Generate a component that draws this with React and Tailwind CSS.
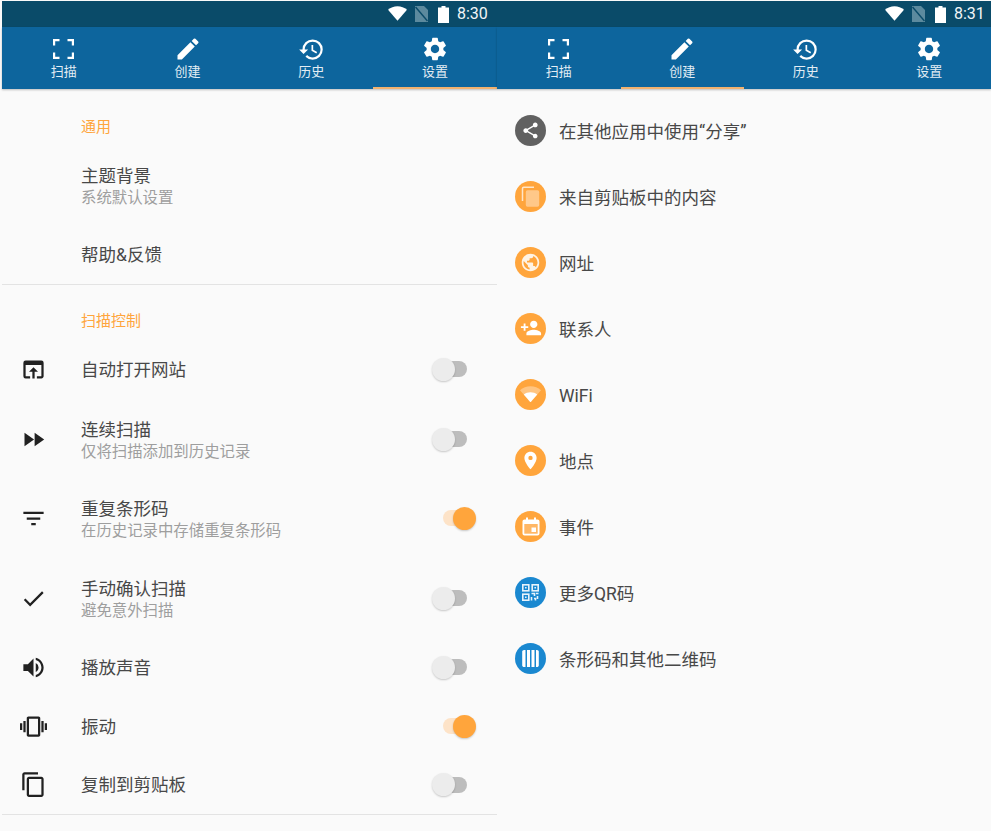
import React from 'react';
import {
    MdCreate, MdHistory, MdSettings, MdOpenInBrowser, MdFastForward, MdFilterList, MdCheck,
    MdVolumeUp, MdVibration, MdContentCopy, MdShare, MdPublic, MdPersonAdd, MdPlace,
} from 'react-icons/md';

const ScanIcon = () => (
    <svg width="21" height="20" viewBox="0 0 21 20" fill="none" stroke="white" strokeWidth="2.2">
        <path d="M1.100 6.500V1.100H6.500M14.500 1.100H19.900V6.500M1.100 13.500V18.900H6.500M14.500 18.900H19.900V13.500" />
    </svg>
);

const WifiFan = ({ size = 20, faded = false }) => (
    <svg width={size} height={size * 0.8} viewBox="0 0 20 16">
        <path d="M10 15.500L0 4C2.800 1.600 6.200 0.300 10 0.300S17.200 1.600 20 4Z" fill="white" opacity={faded ? 0.35 : 1} />
        {faded && <path d="M10 15.500L3.600 8.200C5.400 6.800 7.600 6 10 6S14.600 6.800 16.400 8.200Z" fill="white" />}
    </svg>
);

const CopyBadge = () => (
    <svg width="19" height="21" viewBox="0 0 19 21" fill="none">
        <rect x="5.500" y="5" width="12" height="15" rx="1" fill="#ffe6c9" opacity="0.55" stroke="#ffe6c9" strokeWidth="1.400" />
        <path d="M1.500 15V2.500C1.500 1.800 2 1.300 2.700 1.300H13" stroke="#ffe6c9" strokeWidth="1.500" />
    </svg>
);

const CalendarBadge = () => (
    <svg width="18" height="19" viewBox="0 0 18 19">
        <path d="M4 0.500H6V2.500H12V0.500H14V2.500H15.500C16.600 2.500 17.500 3.400 17.500 4.500V16.500C17.500 17.600 16.600 18.500 15.500 18.500H2.500C1.400 18.500 0.500 17.600 0.500 16.500V4.500C0.500 3.400 1.400 2.500 2.500 2.500H4Z" fill="white" />
        <rect x="2.300" y="7" width="13.400" height="9.700" fill="#ffb765" />
        <rect x="9.500" y="10.500" width="4.500" height="4.500" fill="white" />
    </svg>
);

const QrBadge = () => (
    <svg width="17" height="17" viewBox="0 0 17 17" fill="none" stroke="#e8f3fb" strokeWidth="1.600">
        <rect x="0.800" y="0.800" width="6" height="6" />
        <rect x="10.200" y="0.800" width="6" height="6" />
        <rect x="0.800" y="10.200" width="6" height="6" />
        <path d="M3 3.800H4.600M12.400 3.800H14M3 13.200H4.600M9.500 9.500H12.500V12M14 9.500H16.500M9.500 13V16.500M12 14.500H13.500V16.500M15.500 12V15" />
    </svg>
);

const BarcodeIcon = () => (
    <svg width="17" height="17" viewBox="0 0 17 17" fill="white">
        <path d="M2 0H3.500V17H2C1 17 0.200 16.200 0.200 15.200V1.800C0.200 0.800 1 0 2 0Z" />
        <rect x="5" width="3" height="17" />
        <rect x="9.500" width="3" height="17" />
        <path d="M14 0H15C16 0 16.800 0.800 16.800 1.800V15.200C16.800 16.200 16 17 15 17H14Z" />
    </svg>
);

const tabs = [
    { name: '扫描', icon: <ScanIcon /> },
    { name: '创建', icon: <MdCreate size={28} color="white" /> },
    { name: '历史', icon: <MdHistory size={27} color="white" /> },
    { name: '设置', icon: <MdSettings size={28} color="white" /> },
];

const TopBar = ({ time, active, statusPad }) => (
    <div>
        <div className={`h-[26px] bg-[#0a4b69] flex items-center justify-end ${statusPad}`}>
            <WifiFan size={19} />
            <svg className="ml-2" width="13" height="16" viewBox="0 0 13 16">
                <path d="M0 0H9L13 4V16H0Z" fill="#5c8a9e" />
                <path d="M0.500 1L12.500 15" stroke="#0a4b69" strokeWidth="1.500" />
            </svg>
            <svg className="ml-[10px]" width="11" height="17" viewBox="0 0 11 17">
                <path d="M3.500 0H7.500V1.500H11V17H0V1.500H3.500Z" fill="white" />
            </svg>
            <span className="ml-2 text-[16px] text-[#f2f6f8] w-[31px] leading-none">{time}</span>
        </div>
        <div className="h-[62px] bg-[#0d659d] flex shadow-[0_1px_2px_rgba(0,0,0,0.25)]">
            {tabs.map((tab, i) => (
                <div key={tab.name} className={`flex-1 flex flex-col items-center border-b-[2px] ${i === active ? 'border-[#f2b26f]' : 'border-transparent'}`}>
                    <div className="h-[32px] mt-[6px] flex items-center justify-center">{tab.icon}</div>
                    <span className="text-[13px] leading-[18px] text-[#e3edf4] -mt-[2px]">{tab.name}</span>
                </div>
            ))}
        </div>
    </div>
);

const Toggle = ({ on }) => (
    <div className={`relative h-4 rounded-full w-[23px] ${on ? 'mr-[31px] bg-[#fde3c8]' : 'mr-[30px] bg-[#bdbdbd]'}`}>
        <div className={`absolute top-[-3.500px] w-[23px] h-[23px] rounded-full shadow-[0_1px_2px_rgba(0,0,0,0.2)] ${on ? 'left-[10px] bg-[#ffa53c]' : 'left-[-12px] bg-[#ececec]'}`} />
    </div>
);

const Row = ({ h, icon, title, sub, toggle }) => (
    <div className={`flex items-center ${h}`}>
        <div className="w-[62px] flex justify-center text-[#212121] shrink-0">{icon}</div>
        <div className="flex-1 pl-[17px] pt-[1px]">
            <div className="text-[17.500px] leading-[24px] text-[#484848]">{title}</div>
            {sub && <div className="text-[15.400px] leading-[20px] text-[#9e9e9e]">{sub}</div>}
        </div>
        {toggle !== undefined && <Toggle on={toggle} />}
    </div>
);

const SectionTitle = ({ children, className }) => (
    <div className={`h-9 pl-[79px] flex items-center text-[15px] text-[#ffa53c] ${className}`}>{children}</div>
);

const createItems = [
    { label: '在其他应用中使用“分享”', color: 'bg-[#616161]', icon: <MdShare size={19} color="white" /> },
    { label: '来自剪贴板中的内容', color: 'bg-[#ffa53c]', icon: <CopyBadge /> },
    { label: '网址', color: 'bg-[#ffa53c]', icon: <MdPublic size={21} color="#fff3e4" /> },
    { label: '联系人', color: 'bg-[#ffa53c]', icon: <MdPersonAdd size={22} color="white" /> },
    { label: 'WiFi', color: 'bg-[#ffa53c]', icon: <WifiFan size={21} faded /> },
    { label: '地点', color: 'bg-[#ffa53c]', icon: <MdPlace size={21} color="white" /> },
    { label: '事件', color: 'bg-[#ffa53c]', icon: <CalendarBadge /> },
    { label: '更多QR码', color: 'bg-[#1a88d0]', icon: <QrBadge /> },
    { label: '条形码和其他二维码', color: 'bg-[#1a88d0]', icon: <BarcodeIcon /> },
];

export default function App() {
    return (
        <div className="w-[991px] h-[831px] overflow-hidden bg-[#fafafa] flex pt-px pl-[2px] font-['Roboto','Noto_Sans_CJK_SC',sans-serif]">
            {/* Settings screen */}
            <div className="w-[495px] shrink-0">
                <TopBar time="8:30" active={3} statusPad="pr-[9px]" />
                <SectionTitle className="mt-[19px] pt-[3px]">通用</SectionTitle>
                <Row h="h-[82px]" title="主题背景" sub="系统默认设置" />
                <Row h="h-[56px]" title="帮助&反馈" />
                <div className="h-px bg-[#e3e3e3] mt-[2px]" />
                <SectionTitle className="mt-[16px] pt-[5px]">扫描控制</SectionTitle>
                <Row h="h-[64px]" icon={<MdOpenInBrowser size={27} />} title="自动打开网站" toggle={false} />
                <Row h="h-[76px]" icon={<MdFastForward size={27} />} title="连续扫描" sub="仅将扫描添加到历史记录" toggle={false} />
                <Row h="h-[82px]" icon={<MdFilterList size={27} />} title="重复条形码" sub="在历史记录中存储重复条形码" toggle={true} />
                <Row h="h-[78px]" icon={<MdCheck size={27} />} title="手动确认扫描" sub="避免意外扫描" toggle={false} />
                <Row h="h-[60px]" icon={<MdVolumeUp size={27} />} title="播放声音" toggle={false} />
                <Row h="h-[58px]" icon={<MdVibration size={27} />} title="振动" toggle={true} />
                <Row h="h-[59px]" icon={<MdContentCopy size={27} />} title="复制到剪贴板" toggle={false} />
                <div className="h-px bg-[#e3e3e3]" />
            </div>

            {/* Create screen */}
            <div className="flex-1">
                <TopBar time="8:31" active={1} statusPad="pr-[6px]" />
                <div className="pt-[8px] pl-[18px]">
                    {createItems.map((item) => (
                        <div key={item.label} className="h-[66px] flex items-center gap-[13px]">
                            <div className={`w-[31px] h-[31px] rounded-full flex items-center justify-center ${item.color}`}>{item.icon}</div>
                            <span className="text-[17.500px] text-[#484848] pt-[4px]">{item.label}</span>
                        </div>
                    ))}
                </div>
            </div>
        </div>
    );
}
